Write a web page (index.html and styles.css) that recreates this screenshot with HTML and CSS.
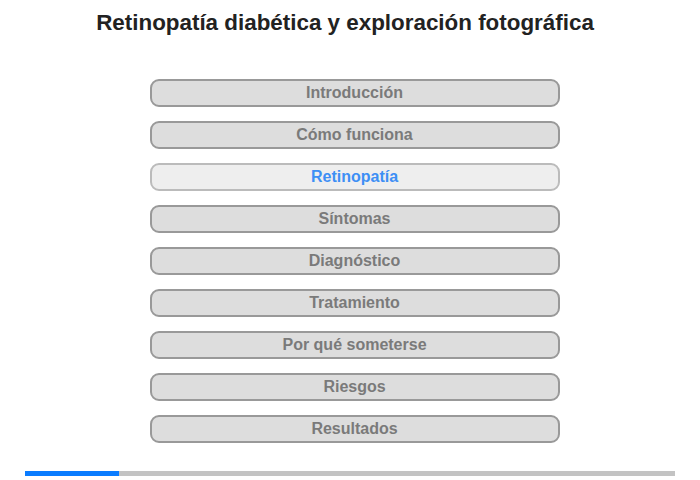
FILE: index.html
```html
<!DOCTYPE html>
<html lang="es">
  <head>
    <meta charset="UTF-8" />
    <meta name="viewport" content="width=device-width, initial-scale=1.0" />
    <link rel="stylesheet" href="styles.css">
  </head>
  <body>
    <h1 class="title">Retinopatía diabética y exploración fotográfica</h1>

    <nav class="menu">
      <div class="item">Introducción</div>
      <div class="item">Cómo funciona</div>
      <div class="item active">Retinopatía</div>
      <div class="item">Síntomas</div>
      <div class="item">Diagnóstico</div>
      <div class="item">Tratamiento</div>
      <div class="item">Por qué someterse</div>
      <div class="item">Riesgos</div>
      <div class="item">Resultados</div>
    </nav>

    <div class="progress">
      <div class="progress-fill" style="width: 14.5%"></div>
    </div>
  </body>
</html>
```

FILE: styles.css
```css
body {
  margin: 0;
  background-color: white;
  font-family: "Liberation Sans", Arial, sans-serif;
}

.title {
  margin: 0;
  padding: 10px 10px 0 0;
  text-align: center;
  font-size: 22.4px;
  font-weight: bold;
  color: #222;
}

.menu {
  display: flex;
  flex-direction: column;
  align-items: center;
  gap: 14px;
  margin-top: 43px;
  padding-left: 9px;
}

.item {
  box-sizing: border-box;
  width: 410px;
  height: 28px;
  line-height: 24px;
  border: 2px solid #999;
  border-radius: 9px;
  background-color: #ddd;
  color: #7a7a7a;
  font-size: 16px;
  font-weight: bold;
  text-align: center;
}

.item.active {
  border-color: #bbb;
  background-color: #eee;
  color: #3d8ff5;
}

.progress {
  margin: 28px 25px 0;
  height: 5px;
  background-color: #c3c3c3;
}

.progress-fill {
  height: 100%;
  background-color: #0a7cff;
}
```
